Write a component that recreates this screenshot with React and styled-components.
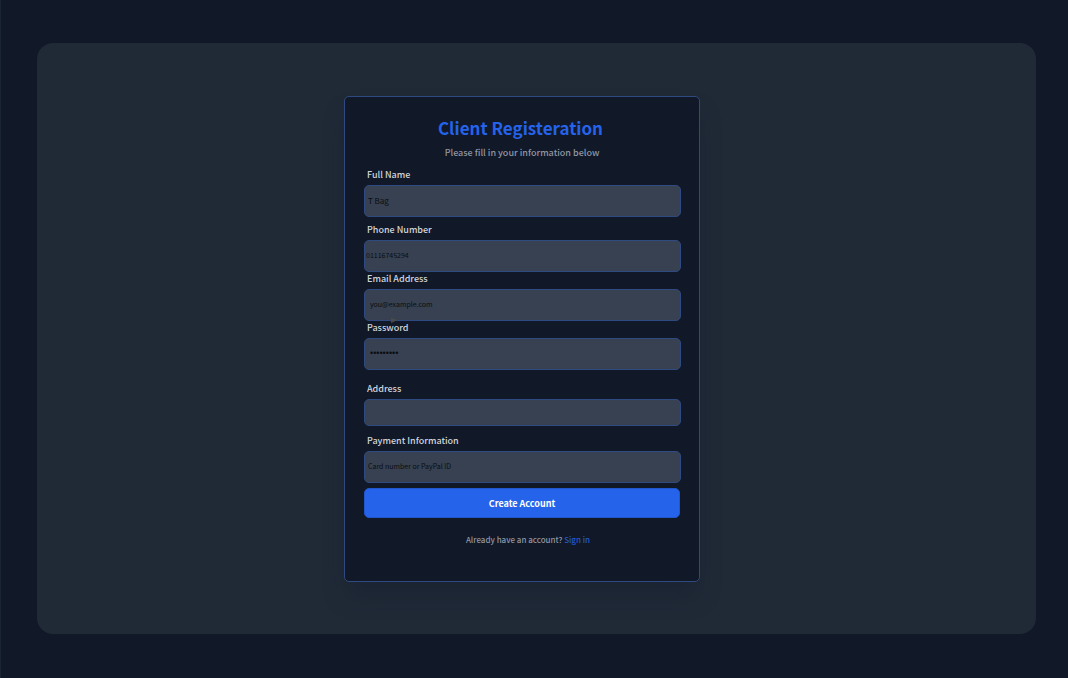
import React from "react";
import styled, { createGlobalStyle } from "styled-components";

const GlobalStyle = createGlobalStyle`
  *, *::before, *::after { box-sizing: border-box; }
  body {
    margin: 0;
    background: #111827;
    font-family: "Noto Sans CJK SC", "Noto Sans", sans-serif;
  }
`;

const Page = styled.main`
  min-height: 100vh;
  padding: 43px 32px 44px 36px;
  display: flex;
  background: #111827;
  border-left: 1px solid #1b2433;
`;

const Panel = styled.section`
  flex: 1;
  display: flex;
  justify-content: center;
  align-items: center;
  padding: 53px 29px 52px 0;
  border-radius: 16px;
  background: #202a37;
`;

const Card = styled.form`
  width: 100%;
  max-width: 356px;
  padding: 20px 18px 33px 19px;
  border: 1px solid #2f4a80;
  border-radius: 5px;
  background: #111827;
  box-shadow: 0 16px 24px -4px rgba(17, 24, 39, 0.35);
  display: flex;
  flex-direction: column;
`;

const Title = styled.h1`
  margin: 0;
  padding-right: 4px;
  font-size: 17px;
  line-height: 22px;
  font-weight: 700;
  text-align: center;
  color: #2563eb;
`;

const Subtitle = styled.p`
  margin: 6px 0 7px;
  padding-right: 1px;
  font-size: 9px;
  line-height: 16px;
  font-weight: 500;
  text-align: center;
  color: #8f96a3;
`;

const Field = styled.div`
  position: relative;
  display: flex;
  flex-direction: column;
  gap: 3px;
  margin-bottom: ${(p) => p.$after}px;
`;

const Label = styled.label`
  padding-left: 3px;
  font-size: 9px;
  line-height: 14px;
  font-weight: 500;
  color: #d1d5db;
`;

const Input = styled.input`
  width: 100%;
  height: ${(p) => (p.$short ? 27 : 32)}px;
  padding: 0 3px 2px ${(p) => p.$indent || 3}px;
  border: 1px solid #2f4a80;
  border-radius: 5px;
  outline: none;
  background: #374151;
  color: #0b0d10;
  font-family: inherit;
  font-size: ${(p) => (p.$large ? 8 : 7)}px;
  &::placeholder { color: #0b0d10; opacity: 1; }
  &[type="password"] {
    font-family: "Liberation Sans", sans-serif;
    font-size: 9px;
  }
`;

const Pointer = styled.svg`
  position: absolute;
  left: 27px;
  bottom: -3px;
`;

const Submit = styled.button`
  height: 30px;
  margin-right: 1px;
  padding: 0;
  border: 1px solid #2156cc;
  border-radius: 5px;
  background: #2563eb;
  color: #ffffff;
  font-family: inherit;
  font-size: 9px;
  font-weight: 700;
`;

const Footer = styled.p`
  margin: 14px 0 0;
  padding-left: 11px;
  font-size: 8px;
  line-height: 16px;
  font-weight: 500;
  text-align: center;
  color: #8f96a3;
`;

const SignIn = styled.a`
  color: #2458cf;
  text-decoration: none;
`;

const fields = [
  { id: "name", label: "Full Name", type: "text", value: "T Bag", large: true, after: 6 },
  { id: "phone", label: "Phone Number", type: "tel", value: "01116745294", indent: 1, after: 0 },
  { id: "email", label: "Email Address", type: "email", placeholder: "you@example.com", indent: 5, pointer: true, after: 0 },
  { id: "password", label: "Password", type: "password", value: "password1", indent: 5, after: 12 },
  { id: "address", label: "Address", type: "text", short: true, after: 8 },
  { id: "payment", label: "Payment Information", type: "text", placeholder: "Card number or PayPal ID", after: 5 },
];

export default function App() {
  return (
    <>
      <GlobalStyle />
      <Page>
        <Panel>
          <Card onSubmit={(e) => e.preventDefault()}>
            <Title>Client Registeration</Title>
            <Subtitle>Please fill in your information below</Subtitle>
            {fields.map((f) => (
              <Field key={f.id} $after={f.after}>
                <Label htmlFor={f.id}>{f.label}</Label>
                <Input
                  id={f.id}
                  type={f.type}
                  defaultValue={f.value}
                  placeholder={f.placeholder}
                  $short={f.short}
                  $large={f.large}
                  $indent={f.indent}
                />
                {f.pointer && (
                  <Pointer width="8" height="6" viewBox="0 0 8 6" aria-hidden="true">
                    <path d="M0 0 L7 2 L0 5 Z" fill="#4a4a4a" />
                  </Pointer>
                )}
              </Field>
            ))}
            <Submit type="submit">Create Account</Submit>
            <Footer>
              Already have an account? <SignIn href="#signin">Sign in</SignIn>
            </Footer>
          </Card>
        </Panel>
      </Page>
    </>
  );
}
